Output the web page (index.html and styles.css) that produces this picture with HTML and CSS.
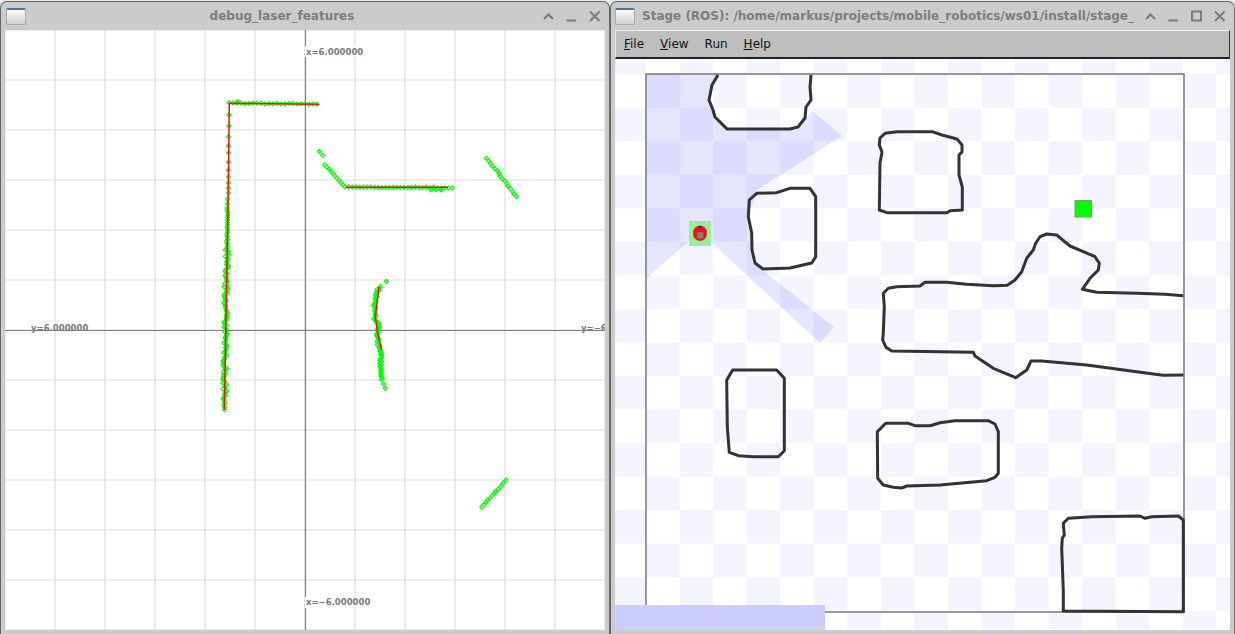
FILE: index.html
```html
<!DOCTYPE html>
<html>
<head>
<meta charset="UTF-8">
<title>debug_laser_features + Stage</title>
<link rel="stylesheet" href="styles.css">
</head>
<body>

<div class="desktop">

  <!-- left window: scan plot -->
  <div class="window plot-window">
    <div class="titlebar">
      <div class="win-icon"></div>
      <div class="win-title center">debug_laser_features</div>
      <div class="win-buttons">
        <svg class="win-btn" viewBox="0 0 23 16"><path d="M7 11l4.500-4.500 4.500 4.500"/></svg>
        <svg class="win-btn" viewBox="0 0 23 16"><path d="M6.500 12.500h9.500"/></svg>
        <svg class="win-btn" viewBox="0 0 23 16"><path d="M7 3.500l9.500 9.500M16.500 3.500l-9.500 9.500"/></svg>
      </div>
    </div>
    <div class="win-body">
      <svg id="plot" class="canvas-plot" viewBox="5 30 600 600">
        <defs>
          <pattern id="grid" x="30" y="55" width="50" height="50" patternUnits="userSpaceOnUse">
            <path class="grid-line" d="M25 0V50M0 25H50"/>
          </pattern>
        </defs>
        <rect x="5" y="30" width="600" height="600" fill="#fff"/>
        <rect x="5" y="30" width="600" height="600" fill="url(#grid)"/>
        <path class="axis-line" d="M305.500 30V630M5 330.500H605"/>

        <rect class="label-bg" x="305" y="46" width="60" height="11"/>
        <text class="axis-label" x="306" y="55">x=6.000000</text>
        <rect class="label-bg" x="305" y="597" width="67" height="11"/>
        <text class="axis-label" x="306" y="605">x=−6.000000</text>
        <text class="axis-label" x="31" y="331">y=6.000000</text>
        <text class="axis-label" x="581" y="331">y=−6.000000</text>

        <g id="scan"></g>

        <polyline class="fit" points="319,104.300 229.300,103.200 228,210 224.300,410"/>
        <polyline class="fit" points="345.700,187.300 448,187.300"/>
        <polyline class="fit" points="379,286.700 375.300,316.700 377.700,333 381.700,350"/>
      </svg>
    </div>
  </div>

  <!-- right window: simulator -->
  <div class="window stage-window">
    <div class="titlebar">
      <div class="win-icon"></div>
      <div class="win-title">Stage (ROS): /home/markus/projects/mobile_robotics/ws01/install/stage_ros/lib/stage_ros</div>
      <div class="win-buttons">
        <svg class="win-btn" viewBox="0 0 23 16"><path d="M7 11l4.500-4.500 4.500 4.500"/></svg>
        <svg class="win-btn" viewBox="0 0 23 16"><path d="M6.500 12.500h9.500"/></svg>
        <svg class="win-btn" viewBox="0 0 23 16"><path d="M7 3.500h9v9h-9z"/></svg>
        <svg class="win-btn" viewBox="0 0 23 16"><path d="M7 3.500l9.500 9.500M16.500 3.500l-9.500 9.500"/></svg>
      </div>
    </div>
    <div class="win-body">
      <div class="menubar">
        <span class="menu-item"><u>F</u>ile</span>
        <span class="menu-item"><u>V</u>iew</span>
        <span class="menu-item">Run</span>
        <span class="menu-item"><u>H</u>elp</span>
      </div>
      <svg class="canvas-stage" viewBox="615 59 615 571">
        <defs>
          <pattern id="checker" x="646" y="74" width="67.100" height="67.100" patternUnits="userSpaceOnUse">
            <rect width="33.550" height="33.550" fill="#f4f4ff"/>
            <rect x="33.550" y="33.550" width="33.550" height="33.550" fill="#f4f4ff"/>
          </pattern>
        </defs>
        <rect x="615" y="59" width="615" height="571" fill="#fff"/>
        <rect x="615" y="59" width="615" height="571" fill="url(#checker)"/>

        <!-- laser field of view -->
        <path class="laser" d="M700 232L646.500 278V74H716L710 100L713 112L722 124L735 130H797L812 111L842 136L757 190L749 215L752 262L834 327L820 343Z"/>

        <rect class="world" x="646" y="74" width="538" height="538"/>

        <!-- obstacles -->
        <path class="obstacle" d="M718 75L712 85L709 100L713 110L715 117L727 129H790L798 127L805 118L806 107L811 100L810 87L811 75"/>
        <path class="obstacle" d="M879.300 210L880 163L882 152L879.300 145L880 138L885 133.300L897 131.700H932L942 135L957 139L962 145V152L959 155V175L962.300 187V210L950 210.700L947 212.700H887Z"/>
        <path class="obstacle" d="M756.700 193.300L776.700 192.700L790 188.300H810L815.700 196.700V256.700L811.700 263L790 268L763 269L755 263L752 250L751.700 233L748.300 216.700L749.300 200Z"/>
        <path class="obstacle" d="M1183.300 295.700L1165 294.300L1136.700 293.300L1096.700 292.300L1082.300 289.300L1090 278.300L1098.300 270L1099.300 263.300L1095 256.700L1083.300 251.700L1070 246L1056.700 235L1046.700 234L1040 236.700L1035.700 243.300L1033.300 250L1026.700 258.300L1021.700 271.700L1015 280L1007.300 285.300L993.300 285.700L966.700 284.300L946.700 282.300H925L920 286L896.700 286.700L888.300 288.300L883.300 293.300L884.300 306.700L883.300 333.300L882.700 340L886 347.300L891.700 351L973.300 352.300L975 356L993.300 368.300L1015.700 377.700L1026.700 370L1031 361H1041.700L1086.700 365L1153.300 374L1163.300 375.300L1183.300 375"/>
        <path class="obstacle" d="M732.700 370H776.700L784.300 378.300V450.700L778.300 456.700H753.300L738.300 455.700L729.300 452.300L727.300 426.700L726.700 380Z"/>
        <path class="obstacle" d="M885.700 423.300H908.300L915 425.700H930L940 422.700L955 420.700H988.300L995 424L998.300 431.700V473.300L995 477.300L986.700 480.700L940 485L906.700 486L901.700 488L893.300 487.300L883.300 485L877.700 478.300L877.300 431.700Z"/>
        <path class="obstacle" d="M1183.300 611.700L1063.300 611V590L1061.700 548.300L1062.300 538.300L1064.300 535L1063.300 523.300L1068.300 518.300L1091.700 516.700L1140 516L1145 518.300L1151.700 516.700L1178.300 516L1183.300 520Z"/>

        <!-- goal -->
        <rect class="goal" x="1075" y="200.500" width="16.500" height="16.500"/>

        <!-- robot -->
        <rect class="robot-zone" x="689" y="221" width="22" height="25"/>
        <rect class="robot-body" x="693.500" y="226" width="13" height="14.500" rx="6"/>
        <rect class="robot-core" x="697.300" y="232.300" width="6" height="6"/>
        <rect class="robot-nose" x="699" y="226" width="2" height="2"/>

        <rect class="status-bar" x="615" y="605" width="210" height="25"/>
      </svg>
    </div>
  </div>

</div>

<script src="plot.js"></script>
</body>
</html>
```

FILE: styles.css
```css
html, body {
  margin: 0;
  height: 100%;
}

body {
  background: #e8e8e8;
  overflow: hidden;
  font-family: "DejaVu Sans", sans-serif;
}

.desktop {
  display: flex;
  height: 634px;
  padding-top: 1px;
  box-sizing: border-box;
}

.window {
  display: flex;
  flex-direction: column;
  box-sizing: border-box;
  background: #cbcbcb;
  border-top: 1px solid #666;
  border-radius: 7px 7px 0 0;
}

.plot-window {
  width: 610px;
  border-left: 1px solid #666;
  border-right: 1px solid #666;
}

.stage-window {
  width: 625px;
  border-left: 1px solid #666;
  border-right: 1px solid #777;
}

.titlebar {
  display: flex;
  align-items: center;
  height: 28px;
  flex: none;
  padding-right: 3px;
  padding-left: 5px;
}

.stage-window .titlebar {
  padding-left: 4px;
}

.win-icon {
  width: 18px;
  height: 14px;
  flex: none;
  border: 1px solid #aaa;
  border-top: 2px solid #4f6f9f;
  border-radius: 2px;
  background: linear-gradient(#fdfdfd, #d0d0d0);
}

.win-title {
  flex: 1;
  min-width: 0;
  margin-left: 6px;
  font-size: 12px;
  font-weight: bold;
  color: #7d7d7d;
  white-space: nowrap;
  overflow: hidden;
}

.win-title.center {
  text-align: center;
  margin-right: 5px;
}

.stage-window .win-title {
  margin-left: 7px;
  margin-right: 4px;
}

.win-buttons {
  display: flex;
  flex: none;
}

.win-btn {
  width: 23px;
  height: 16px;
}

.win-btn path {
  fill: none;
  stroke: #7a7a7a;
  stroke-width: 2;
}

.win-body {
  flex: 1;
  display: flex;
  flex-direction: column;
  min-height: 0;
  padding: 0 4px 4px;
}

.canvas-plot {
  display: block;
  width: 600px;
  height: 600px;
}

.canvas-stage {
  display: block;
  width: 615px;
  height: 571px;
}

.menubar {
  display: flex;
  gap: 16px;
  align-items: center;
  box-sizing: border-box;
  height: 29px;
  width: 615px;
  flex: none;
  padding-left: 8px;
  background: #bebebe;
  border-top: 1px solid #f0f0f0;
  border-left: 1px solid #e4e4e4;
  border-right: 1px solid #333;
  border-bottom: 2px solid #222;
  font-size: 12px;
  color: #111;
}

/* plot */
.grid-line {
  fill: none;
  stroke: #dedede;
  stroke-width: 1.2;
}

.axis-line {
  fill: none;
  stroke: #808080;
  stroke-width: 1.2;
}

.label-bg {
  fill: #fff;
}

.axis-label {
  font-family: "DejaVu Sans", sans-serif;
  font-size: 8.500px;
  font-weight: bold;
  fill: #7a7a7a;
}

.scan-points {
  fill: none;
  stroke: #00ff00;
  stroke-width: 1.2;
}

.fit {
  fill: none;
  stroke: #f01010;
  stroke-width: 1.5;
}

/* stage */
.laser {
  fill: rgba(0, 0, 255, 0.1);
}

.world {
  fill: none;
  stroke: #777;
  stroke-width: 1.5;
}

.obstacle {
  fill: none;
  stroke: #333;
  stroke-width: 3;
  stroke-linejoin: round;
  filter: blur(0.35px);
}

.goal {
  fill: #00ff00;
  stroke: #66aa66;
  stroke-width: 1;
}

.robot-zone {
  fill: #99ee99;
}

.robot-body {
  fill: #f01414;
  stroke: #8a1a1a;
  stroke-width: 0.5;
}

.robot-core {
  fill: #808080;
}

.robot-nose {
  fill: #1111dd;
}

.status-bar {
  fill: #ccccff;
}
```

FILE: plot.js
```js
// laser scan points for the left window, given as polylines in page coordinates
const scans = [
  { step: 4, wobble: 0.5, pts: [[229, 103], [320, 104.3]] },
  { step: 2.4, wobble: 0.7, pts: [[227.5, 208], [227, 250]] },
  { step: 1.6, wobble: 1.9, pts: [[227, 250], [226.5, 270], [225.5, 300], [225, 360], [224.5, 400]] },
  { step: 2.4, wobble: 0.6, pts: [[224.5, 400], [224.3, 411]] },
  { step: 3, wobble: 0.5, pts: [[325, 164.7], [345, 187]] },
  { step: 3.7, wobble: 0.5, pts: [[345, 187], [440, 187.6], [452.7, 187.3]] },
  { step: 1.5, wobble: 1.2, pts: [[379.3, 286.7], [376.7, 293], [374.3, 306.7], [375, 320], [378, 323], [377.7, 343], [381.7, 353], [380, 370], [382.7, 380]] },
  { step: 3.2, wobble: 1, pts: [[487.3, 158.3], [516.7, 196.7]] },
  { step: 3, wobble: 0.8, pts: [[482, 507], [506, 480]] }
];

// the sparse far end of the wall and the few stray returns
const single = [
  [229, 115], [229, 126], [228.5, 136.7], [228.5, 145.7], [228.5, 153], [228.5, 162],
  [228.5, 170], [228.5, 176.7], [228.5, 182.7], [228.5, 188], [228.5, 193], [227.5, 199], [227.5, 204],
  [237.5, 101.5], [319.3, 151.3], [322.7, 155.3], [386.3, 281.3], [385.3, 388.3], [383.5, 384],
  [431, 190], [436, 190], [441, 190]
];

let d = '';
function diamond(x, y) {
  d += `M${x.toFixed(1)} ${(y - 2).toFixed(1)}l2 2-2 2-2-2z`;
}

scans.forEach((scan, n) => {
  let left = 0;
  for (let i = 1; i < scan.pts.length; i++) {
    const [x0, y0] = scan.pts[i - 1];
    const [x1, y1] = scan.pts[i];
    const len = Math.hypot(x1 - x0, y1 - y0);
    let t = left;
    while (t < len) {
      // fixed wobble so the picture is the same on every load
      const s = Math.sin(t * 12.9898 + n * 78.233) * 43758.5453;
      const off = (s - Math.floor(s) - 0.5) * 2 * scan.wobble;
      const horizontal = Math.abs(x1 - x0) > Math.abs(y1 - y0) * 3;
      diamond(x0 + (x1 - x0) * t / len + (horizontal ? 0 : off),
              y0 + (y1 - y0) * t / len + (horizontal ? off : 0));
      t += scan.step;
    }
    left = t - len;
  }
});
single.forEach(p => diamond(p[0], p[1]));

const path = document.createElementNS('http://www.w3.org/2000/svg', 'path');
path.setAttribute('class', 'scan-points');
path.setAttribute('d', d);
document.getElementById('scan').appendChild(path);
```
